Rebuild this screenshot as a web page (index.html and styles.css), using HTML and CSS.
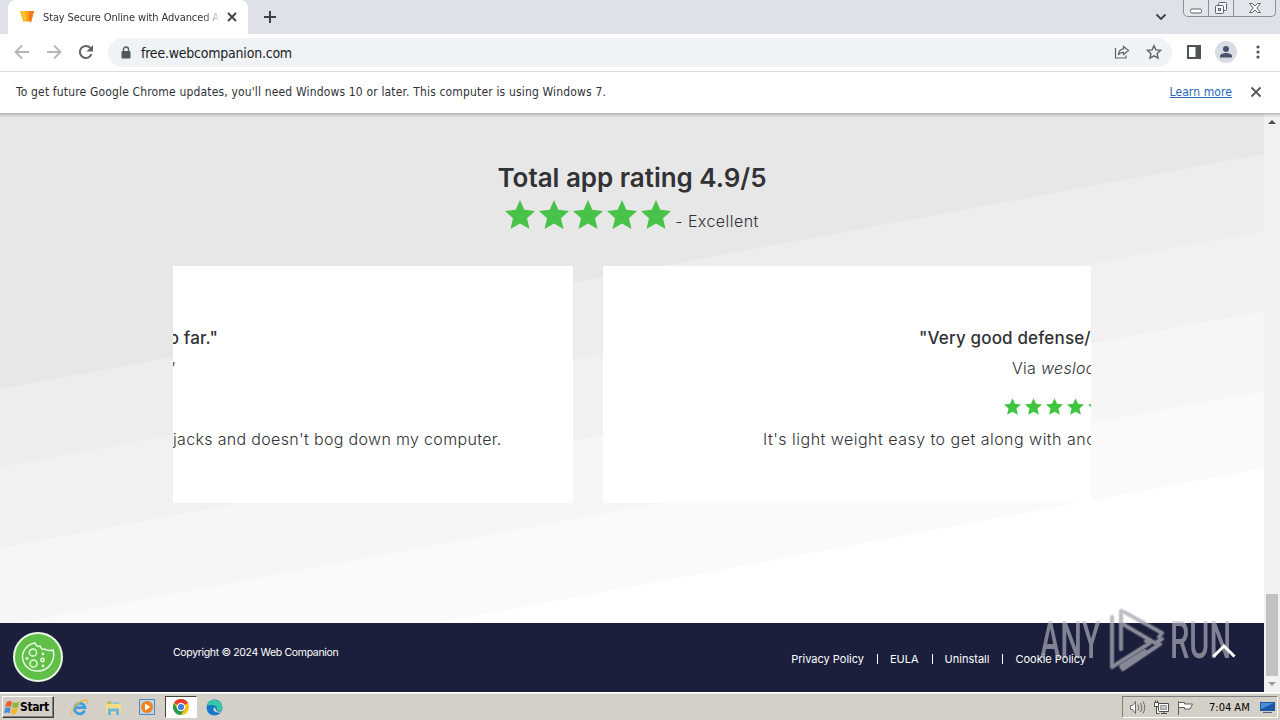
FILE: index.html
```html
<!DOCTYPE html>
<html lang="en">
<head>
    <meta charset="UTF-8">
    <meta name="viewport" content="width=device-width, initial-scale=1.0">
    <title>Stay Secure Online with Advanced Antivirus</title>
    <link rel="stylesheet" href="styles.css">
</head>
<body>
    <svg class="defs" width="0" height="0">
        <symbol id="star" viewBox="0 0 30 29">
            <path d="M15 0l4.300 9.800L30 11l-8 7.200L24.500 29 15 23.600 5.500 29 8 18.200 0 11l10.700-1.200z"/>
        </symbol>
    </svg>

    <div class="tabstrip">
        <div class="tab">
            <svg class="favicon" width="14" height="14" viewBox="0 0 14 14"><path d="M0 1h14l-3 11.500-2.500-1.500L7 12l-1.500-1L3.500 12z" fill="#fba31c"/><path d="M0 1h5l2 8-1.500 1.500-2 1.500z" fill="#f7c231"/><path d="M9 1h5l-3 11.500-2.500-2z" fill="#f47a1c"/></svg>
            <span class="tab-title">Stay Secure Online with Advanced A</span>
            <svg class="tab-close" width="10" height="10" viewBox="0 0 10 10"><path d="M1 1l8 8M9 1L1 9" stroke="#3c4043" stroke-width="1.800"/></svg>
        </div>
        <svg class="new-tab" width="12" height="12" viewBox="0 0 12 12"><path d="M6 0v12M0 6h12" stroke="#3c4043" stroke-width="2"/></svg>
        <svg class="tab-search" width="12" height="8" viewBox="0 0 12 8"><path d="M1.500 1.500L6 6l4.500-4.500" fill="none" stroke="#3c4043" stroke-width="1.800"/></svg>
        <div class="window-buttons">
            <span class="minimize"><svg width="14" height="6" viewBox="0 0 14 6"><rect x="1.500" y="1" width="11" height="4" rx="1.500" fill="#fff" stroke="#5c6370"/></svg></span>
            <span class="restore"><svg width="14" height="14" viewBox="0 0 14 14" fill="#f4f5f8" stroke="#5c6370"><rect x="4.500" y="1.500" width="8" height="8" rx="1"/><rect x="1.500" y="4.500" width="8" height="8" rx="1"/><rect x="4.500" y="7.500" width="2" height="2"/></svg></span>
            <span class="close"><svg width="14" height="12" viewBox="0 0 14 12"><path d="M1.500 1.500h3L7 4l2.500-2.500h3L8.800 6l3.700 4.500h-3L7 8l-2.500 2.500h-3L5.200 6z" fill="#fff" stroke="#5c6370"/></svg></span>
        </div>
    </div>

    <div class="toolbar">
        <svg class="nav-icon" width="16" height="16" viewBox="0 0 16 16"><path d="M15 8H2M8 1.500L1.500 8 8 14.500" fill="none" stroke="#b4b6b9" stroke-width="1.800"/></svg>
        <svg class="nav-icon" width="16" height="16" viewBox="0 0 16 16"><path d="M1 8h13M8 1.500L14.500 8 8 14.500" fill="none" stroke="#b4b6b9" stroke-width="1.800"/></svg>
        <svg class="nav-icon" width="16" height="16" viewBox="0 0 16 16"><path d="M13.500 10A6 6 0 1 1 12.400 4" fill="none" stroke="#5f6368" stroke-width="2"/><path d="M15 1v6.500H8.500z" fill="#5f6368"/></svg>
        <div class="omnibox">
            <svg width="10" height="13" viewBox="0 0 10 13"><rect x="0.500" y="5" width="9" height="7.500" rx="1" fill="#54585d"/><path d="M2.500 6V3.500a2.500 2.500 0 0 1 5 0V6" fill="none" stroke="#54585d" stroke-width="1.400"/></svg>
            <span class="url">free.webcompanion.com</span>
            <svg class="share" width="16" height="16" viewBox="0 0 16 16" fill="none" stroke="#5f6368" stroke-width="1.200"><path d="M1.500 4v10h10.500v-2.500"/><path d="M9.500 2.500L14.500 6.500l-5 4V8.300C7 8.300 5.500 9 4.300 11c.3-3.500 2.200-5.800 5.200-6.200z"/></svg>
            <svg width="16" height="16" viewBox="0 0 16 16"><path d="M8 1.700l1.900 4.200 4.600.5-3.400 3.100.9 4.600L8 11.800l-4 2.300.9-4.600L1.500 6.400l4.600-.5z" fill="none" stroke="#5f6368" stroke-width="1.400"/></svg>
        </div>
        <svg class="side-panel" width="14" height="14" viewBox="0 0 14 14"><path d="M1 1h12v12H1z" fill="none" stroke="#505357" stroke-width="2"/><path d="M8.500 1H13v12H8.500z" fill="#505357"/></svg>
        <svg class="avatar" width="22" height="22" viewBox="0 0 22 22"><circle cx="11" cy="11" r="11" fill="#d8dce3"/><circle cx="11" cy="8" r="3" fill="#48546c"/><path d="M5 16.500v-1.500c0-2 3.500-3 6-3s6 1 6 3v1.500z" fill="#48546c"/></svg>
        <svg class="menu-dots" width="4" height="14" viewBox="0 0 4 14" fill="#505357"><circle cx="2" cy="2" r="1.600"/><circle cx="2" cy="7" r="1.600"/><circle cx="2" cy="12" r="1.600"/></svg>
    </div>

    <div class="infobar">
        <span class="message">To get future Google Chrome updates, you'll need Windows 10 or later. This computer is using Windows 7.</span>
        <a class="learn-more">Learn more</a>
        <svg width="12" height="12" viewBox="0 0 12 12"><path d="M1.500 1.500l9 9M10.500 1.500l-9 9" stroke="#54585d" stroke-width="1.800"/></svg>
    </div>

    <div class="viewport">
        <div class="page">
            <section class="ratings">
                <svg class="bands" width="1264" height="510" viewBox="0 113 1264 510" preserveAspectRatio="none">
                    <path d="M0 113h1264v600H0z" fill="#fff"/>
                    <path d="M0 113h1264v355L0 705z" fill="#fafafa"/>
                    <path d="M0 113h1264v278L0 626z" fill="#f6f6f6"/>
                    <path d="M0 113h1264v198L0 548z" fill="#f1f1f1"/>
                    <path d="M0 113h1264v118L0 467z" fill="#ededed"/>
                    <path d="M0 113h1264v41L0 389z" fill="#e7e7e7"/>
                    <path d="M0 113h1264v4H0z" fill="#d8d8d8"/>
                    <path d="M0 113h1264v2H0z" fill="#bcbcbc"/>
                </svg>
                <h2>Total app rating 4.9/5</h2>
                <div class="score">
                    <svg><use href="#star"/></svg>
                    <svg><use href="#star"/></svg>
                    <svg><use href="#star"/></svg>
                    <svg><use href="#star"/></svg>
                    <svg><use href="#star"/></svg>
                    <span>- Excellent</span>
                </div>
                <div class="carousel">
                    <article class="review leaving">
                        <h3>o far."</h3>
                        <p class="via"><em>"</em></p>
                        <p class="quote">jacks and doesn't bog down my computer.</p>
                    </article>
                    <article class="review entering">
                        <h3>"Very good defense/</h3>
                        <p class="via">Via <em>wesloc</em></p>
                        <div class="stars">
                            <svg><use href="#star"/></svg>
                            <svg><use href="#star"/></svg>
                            <svg><use href="#star"/></svg>
                            <svg><use href="#star"/></svg>
                            <svg><use href="#star"/></svg>
                        </div>
                        <p class="quote">It's light weight easy to get along with and</p>
                    </article>
                </div>
            </section>
            <footer>
                <span class="copyright">Copyright © 2024 Web Companion</span>
                <nav>
                    <a>Privacy Policy</a><i></i>
                    <a>EULA</a><i></i>
                    <a>Uninstall</a><i></i>
                    <a>Cookie Policy</a>
                </nav>
            </footer>
        </div>
        <div class="scrollbar">
            <svg width="8" height="4" viewBox="0 0 8 4"><path d="M0 4l4-4 4 4z" fill="#505050"/></svg>
            <div class="thumb"></div>
            <svg width="8" height="4" viewBox="0 0 8 4"><path d="M0 0h8L4 4z" fill="#9a9a9a"/></svg>
        </div>
    </div>

    <div class="taskbar">
        <div class="start">
            <svg width="16" height="15" viewBox="0 0 16 15"><path d="M2.500 2q3-2 5.500-.3L7 7Q4.300 5.500 1 7.300z" fill="#e8602c"/><path d="M9 2q2.700 1.400 6.500-.2L14 7.200Q11 8.500 8 7.300z" fill="#8cb83c"/><path d="M1 8.200q3-1.800 5.700-.3l-1 5.300Q3 11.800 0 13.400z" fill="#4c8fd8"/><path d="M7.800 8.200q3 1.300 6-.1l-1.300 5.300q-3 1.500-5.700.2z" fill="#f5b82a"/></svg>
            <span>Start</span>
        </div>
        <div class="launcher">
            <svg width="17" height="17" viewBox="0 0 17 17"><path d="M13.700 11.500A5.300 5.300 0 1 1 14 8.700H5" fill="none" stroke="#3f9fde" stroke-width="2.800"/><path d="M1 15C-1 12 6 2.500 14 1c3-.5 2.500 2 1.500 4" fill="none" stroke="#e9bd45" stroke-width="1.300"/></svg>
        </div>
        <div class="launcher">
            <svg width="17" height="17" viewBox="0 0 17 17"><path d="M1 3h5l1 1h8v10H1z" fill="#e9c45d"/><path d="M3 2h3v3H3z" fill="#a9bd74"/><path d="M8 3h6v3H8z" fill="#8fc4e2"/><path d="M1 5h15v9H1z" fill="#f6dc8a"/><path d="M3 9.500h11V16h-3v-3.500H6V16H3z" fill="#6db7de"/></svg>
        </div>
        <div class="launcher">
            <svg width="17" height="17" viewBox="0 0 17 17"><path d="M.5.500h15v15H.5z" fill="#b9d6ed" stroke="#5688b8"/><circle cx="8" cy="8" r="6" fill="#ef8218"/><path d="M6 4.500L11.500 8 6 11.500z" fill="#fff"/></svg>
        </div>
        <div class="launcher active">
            <svg width="16" height="16" viewBox="0 0 16 16"><circle cx="8" cy="8" r="8" fill="#fbc116"/><path d="M8 8L1.070 4A8 8 0 0 1 14.930 4z" fill="#e33b2e"/><path d="M1.070 4A8 8 0 0 0 8 16l3.500-6L8 8 4.500 10z" fill="#2a9c49"/><circle cx="8" cy="8" r="4.200" fill="#fff"/><circle cx="8" cy="8" r="3.100" fill="#3f7fe8"/></svg>
        </div>
        <div class="launcher edge">
            <svg width="17" height="17" viewBox="0 0 17 17"><circle cx="8.500" cy="8.500" r="8" fill="#1678c8"/><path d="M1 6a8 8 0 0 1 15.500 3c0 3-3.500 3.500-6 2.300 1.500-2.500-.5-5-3.500-5.300S1.500 7 1 6z" fill="#38c6a4"/><path d="M10 11.300c1.500 2 4 1.700 6 .2l-1.500 2c-4 .8-7.500-.7-7-4.200.8-1.500 2-1 2.500 2z" fill="#d4d0c8"/></svg>
        </div>
        <div class="tray">
            <svg width="17" height="15" viewBox="0 0 17 15" fill="#fff" stroke="#6b6b6b"><path d="M1.500 5.500h2l3-4v12l-3-4h-2z"/><path d="M9 4.500q2 3 0 6M11.500 3q3 4.500 0 9M14 1.500q3.500 6 0 12" fill="none"/></svg>
            <svg width="17" height="15" viewBox="0 0 17 15" fill="#fff" stroke="#4f4f4f"><path d="M5.500 3.500h10v8h-10z"/><path d="M7.500 5.500h6v4h-6z" fill="#c4c4c4" stroke="#9a9a9a"/><path d="M8 13.500h6M11 11.500v2"/><path d="M1.500 2.500h4v4h-4zM2.500.5v2M4.500.5v2M3.500 6.500v7h3"/></svg>
            <svg width="17" height="15" viewBox="0 0 17 15" fill="#fff" stroke="#5f5f5f"><path d="M1.500 1v14M1.500 2.500h6v1.500h8l-2.500 5H7.500V7.500h-6z"/></svg>
            <span class="clock">7:04 AM</span>
            <svg class="show-desktop" width="15" height="13" viewBox="0 0 15 13"><path d="M0 1h15v9H0z" fill="#1c58a8"/><path d="M1 2h13L1 8z" fill="#4c91d8"/><path d="M3 11h9v1H3z" fill="#53657c"/></svg>
        </div>
    </div>

    <div class="cookie-button">
        <svg width="34" height="34" viewBox="0 0 34 34" fill="none" stroke="#e9f8e2" stroke-width="1.500"><path d="M14 3c1 3 3 4 5 3 1 3 3 4 5 3 2 2 4 2 8 1 3 10-4 21-15 21A14.500 14.500 0 0 1 1.500 17C1.500 10 7 4 14 3z"/><circle cx="12" cy="12.500" r="3.600"/><circle cx="12.500" cy="23.500" r="3.600"/><circle cx="21.500" cy="20" r="1.700"/><g fill="#e9f8e2" stroke="none"><circle cx="22" cy="14" r="1.400"/><circle cx="6" cy="18.500" r="1.400"/><circle cx="22" cy="26" r="1.400"/></g></svg>
    </div>

    <div class="watermark">
        <span>ANY</span>
        <svg width="56" height="64" viewBox="0 0 56 64" fill="none" stroke-linejoin="round" stroke-linecap="round"><path d="M3 9v50l38-24-4-2M12 41V3l5 2 36 20-3 4M12 15l34 20 7-4M51 36L14 61l-2-3 24-15" stroke="#a9abb5" stroke-opacity=".2" stroke-width="6"/><path d="M3 9v50l38-24-4-2M12 41V3l5 2 36 20-3 4M12 15l34 20 7-4M51 36L14 61l-2-3 24-15" stroke="#a9abb5" stroke-opacity=".7" stroke-width="3.500"/></svg>
        <span>RUN</span>
    </div>
    <div class="to-top">
        <svg width="24" height="16" viewBox="0 0 24 16"><path d="M1.500 13.500L12 3l10.500 10.500" fill="none" stroke="#fff" stroke-width="3"/></svg>
    </div>
</body>
</html>
```
FILE: styles.css
```css
* {
    box-sizing: border-box;
}

body {
    margin: 0;
    width: 1280px;
    height: 720px;
    overflow: hidden;
    display: flex;
    flex-direction: column;
    font-family: "DejaVu Sans Condensed", "DejaVu Sans", sans-serif;
    font-stretch: condensed;
    color: #303236;
    background: #fff;
    white-space: nowrap;
}

svg {
    display: block;
    flex: none;
}

.defs {
    position: absolute;
}

h2, h3, p {
    margin: 0;
}

/* Browser chrome */
.tabstrip {
    height: 34px;
    flex: none;
    display: flex;
    align-items: center;
    background: #dee1e7;
    padding-left: 8px;
}

.tab {
    width: 240px;
    height: 34px;
    display: flex;
    align-items: center;
    padding-left: 12px;
    background: #fff;
    border-radius: 8px 8px 0 0;
}

.tab-title {
    width: 176px;
    margin-left: 9px;
    overflow: hidden;
    font-size: 11px;
    letter-spacing: -0.13px;
    -webkit-mask-image: linear-gradient(90deg, #000 160px, transparent 178px);
    mask-image: linear-gradient(90deg, #000 160px, transparent 178px);
}

.tab-close {
    margin-left: 8px;
}

.new-tab {
    margin-left: 16px;
}

.tab-search {
    margin-left: auto;
}

.window-buttons {
    display: flex;
    align-self: flex-start;
    width: 93px;
    height: 17px;
    margin: 0 4px 0 16px;
    border: 1px solid #8b909a;
    border-top: 0;
    border-radius: 0 0 5px 5px;
    background: #e2e5ea;
}

.window-buttons span {
    display: flex;
    align-items: center;
    justify-content: center;
    width: 25px;
    border-right: 1px solid #8b909a;
}

.window-buttons .minimize {
    padding-top: 5px;
}

.window-buttons .close {
    width: 41px;
    border-right: 0;
}

.toolbar {
    height: 38px;
    flex: none;
    display: flex;
    align-items: center;
    padding: 0 20px 1px 14px;
    border-bottom: 1px solid #d9dbde;
}

.nav-icon {
    margin-right: 16px;
}

.omnibox {
    width: 1064px;
    height: 29px;
    display: flex;
    align-items: center;
    margin-left: -2px;
    padding: 0 10px 0 13px;
    border-radius: 15px;
    background: #f0f3f5;
}

.url {
    margin-left: 10px;
    padding-top: 1px;
    font-size: 14px;
    letter-spacing: -0.22px;
    color: #202124;
}

.share {
    margin: 0 16px 0 auto;
}

.side-panel {
    margin-left: 15px;
}

.avatar {
    margin-left: 14px;
}

.menu-dots {
    margin-left: auto;
}

.infobar {
    height: 41px;
    flex: none;
    display: flex;
    align-items: center;
    padding: 0 18px 1px 16px;
    font-size: 12px;
}

.message {
    letter-spacing: 0.16px;
}

.learn-more {
    margin: 0 18px 0 auto;
    letter-spacing: 0.1px;
    color: #2668b5;
    text-decoration: underline;
}

/* Page */
.viewport {
    flex: 1;
    min-height: 0;
    display: flex;
}

.page {
    width: 1264px;
    display: flex;
    flex-direction: column;
    font-family: Inter, sans-serif;
    font-stretch: normal;
}

.ratings {
    position: relative;
    z-index: 0;
    height: 510px;
    display: flex;
    flex-direction: column;
    align-items: center;
    padding-top: 46px;
}

.bands {
    position: absolute;
    inset: 0;
    z-index: -1;
}

h2 {
    font-size: 26px;
    line-height: 37px;
    font-weight: 600;
    letter-spacing: -0.02px;
}

.score {
    display: flex;
    gap: 4px;
    margin-top: 4px;
    fill: #48c248;
}

.score svg {
    width: 30px;
    height: 29px;
}

.score span {
    padding-top: 11px;
    font-size: 16px;
    line-height: 20px;
    letter-spacing: 0.45px;
    font-weight: 350;
}

.carousel {
    width: 918px;
    height: 237px;
    margin-top: 35px;
    display: flex;
    gap: 30px;
    overflow: hidden;
}

.review {
    flex: none;
    background: #fff;
    padding-top: 60px;
    font-size: 16px;
    line-height: 24px;
    font-weight: 350;
    overflow: hidden;
}

.leaving {
    width: 400px;
}

.entering {
    width: 488px;
}

.review h3 {
    font-size: 17px;
    line-height: 24px;
    font-weight: 500;
    letter-spacing: 0.15px;
}

.via {
    margin-top: 6px;
}

.leaving h3 {
    width: 45px;
    display: flex;
    justify-content: flex-end;
}

.leaving .via {
    margin-left: -5px;
}

.leaving .quote {
    margin-top: 47px;
    letter-spacing: 0.33px;
}

.entering h3 {
    padding-left: 316px;
}

.entering .via {
    padding-left: 409px;
    letter-spacing: 0.3px;
}

.stars {
    display: flex;
    gap: 4px;
    margin: 18px 0 0 401px;
    fill: #3fc43f;
}

.stars svg {
    width: 17px;
    height: 17px;
}

.entering .quote {
    margin-top: 12px;
    padding-left: 160px;
    letter-spacing: 0.48px;
}

footer {
    flex: 1;
    display: flex;
    padding: 22px 178px 0 173px;
    background: #1b1f3b;
    color: #fff;
    font-size: 11px;
    line-height: 14px;
}

.copyright {
    padding-top: 1px;
    font-size: 10.500px;
    letter-spacing: -0.34px;
}

nav {
    display: flex;
    align-items: center;
    height: 14px;
    margin: 7px 0 0 auto;
}

nav i {
    width: 1px;
    height: 10px;
    margin: 0 12px 0 13px;
    background: #fff;
}

.scrollbar {
    width: 16px;
    display: flex;
    flex-direction: column;
    align-items: center;
    padding: 7px 0 6px;
    background: #f1f1f1;
    box-shadow: inset 0 2px 0 #c4c4c4, inset 0 4px 0 #e0e0e0;
}

.thumb {
    width: 12px;
    height: 82px;
    margin: auto 0 6px;
    background: #c1c1c1;
}

/* Taskbar */
.taskbar {
    height: 28px;
    flex: none;
    display: flex;
    align-items: center;
    padding: 1px 0 0 2px;
    background: #d4d0c8;
    border-top: 1px solid #fff;
    box-shadow: inset 0 1px 0 #f4f2ee;
}

.start {
    width: 52px;
    height: 22px;
    display: flex;
    align-items: center;
    padding-left: 1px;
    margin-right: 9px;
    border: 1px solid;
    border-color: #fff #404040 #404040 #fff;
    box-shadow: inset -1px -1px 0 #808080;
    font-size: 12px;
    font-weight: 700;
    letter-spacing: -0.4px;
    color: #000;
}

.launcher {
    width: 32px;
    height: 22px;
    margin-right: 2px;
    display: flex;
    align-items: center;
    justify-content: center;
}

.launcher.active {
    background: #fff;
    border: 1px solid;
    border-color: #404040 #fff #fff #404040;
}

.launcher.edge {
    margin-left: -1px;
}

.tray {
    width: 156px;
    height: 22px;
    display: flex;
    align-items: center;
    gap: 7px;
    margin: 0 2px 0 auto;
    padding-left: 6px;
    border: 1px solid;
    border-color: #808080 #fff #fff #808080;
}

.clock {
    width: 44px;
    margin-left: 8px;
    font-size: 11px;
    color: #000;
}

/* Overlays */
.cookie-button {
    position: absolute;
    left: 13px;
    top: 632px;
    width: 50px;
    height: 50px;
    display: flex;
    align-items: center;
    justify-content: center;
    border: 2px solid #e9f8e2;
    border-radius: 50%;
    background: #5fbf46;
}

.watermark {
    position: absolute;
    left: 1040px;
    top: 608px;
    width: 192px;
    height: 64px;
    display: flex;
    justify-content: space-between;
    font-family: Roboto, sans-serif;
    font-stretch: normal;
    font-weight: 500;
    font-size: 52px;
    line-height: 66px;
    color: rgba(190, 192, 202, 0.62);
}

.watermark span {
    width: 62px;
    transform-origin: 0 50%;
    transform: scaleX(0.59);
}

.watermark svg {
    margin-left: 2px;
}

.to-top {
    position: absolute;
    left: 1212px;
    top: 643px;
}
```
